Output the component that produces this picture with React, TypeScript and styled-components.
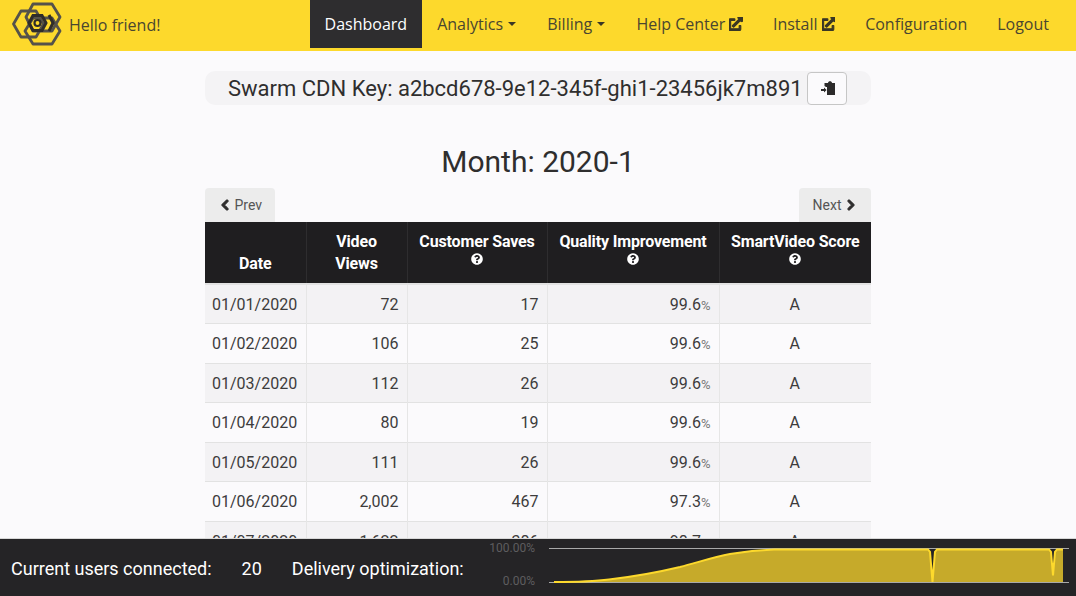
import React from "react"
import styled, { createGlobalStyle } from "styled-components"
import { FaChevronLeft, FaChevronRight, FaExternalLinkAlt, FaQuestionCircle } from "react-icons/fa"

const rows = [
  ["01/01/2020", "72", "17", "99.6"],
  ["01/02/2020", "106", "25", "99.6"],
  ["01/03/2020", "112", "26", "99.6"],
  ["01/04/2020", "80", "19", "99.6"],
  ["01/05/2020", "111", "26", "99.6"],
  ["01/06/2020", "2,002", "467", "97.3"],
  ["01/07/2020", "1,622", "386", "98.7"],
]

const Logo = () => (
  <svg width="50" height="46" viewBox="0 0 50 46" fill="none">
    <g stroke="#55524a" strokeWidth="2.8" strokeLinejoin="round">
      <path d="M1.5 23 L9 10 H24 L31.5 23 L24 36 H9 Z" />
      <path d="M14 16 L21 3 H40 L48 16 L40 30 H21 Z" />
      <path d="M13 30 L21 17 H40 L48 30 L40 43 H21 Z" />
    </g>
    <path d="M17 22 L21 14.5 H30 L34 22 L30 29.5 H21 Z" stroke="#2f2d2a" strokeWidth="3" />
    <path d="M37 14 L41 22 L37 30" stroke="#2f2d2a" strokeWidth="3" fill="none" />
    <circle cx="25.5" cy="22" r="3" stroke="#2f2d2a" strokeWidth="2.2" />
  </svg>
)

const PasteIcon = () => (
  <svg width="16" height="16" viewBox="0 0 16 16">
    <path d="M5.5 3 H9 C9 0.5 13 0.5 13 3 H16 V15 H8 V7 H7 L5.5 6 Z" fill="#2b2a2a" />
    <path d="M2 9 H5 V7.5 L7.6 10 L5 12.5 V11 H2 Z" fill="#2b2a2a" />
  </svg>
)

const curve =
  "M5 35 C30 35 45 34.5 60 32.5 C90 29 110 25 131 20 C150 15 165 10 181 7 C195 4.5 205 3 225 2.5 H379 L381 5 L383.5 35 L386 5 L388 2.5 H500 L502 5 L504 28.5 L506 5 L508 2.5 H514"

const Chart = () => (
  <ChartBox>
    <AxisLabels>
      <span>100.00%</span>
      <span>0.00%</span>
    </AxisLabels>
    <ChartSvg width="527" height="40" viewBox="0 0 527 40">
      <path d="M0 1.5 H520 M0 35.5 H520" stroke="#a9a9a9" strokeWidth="1.2" />
      <path d={`${curve} V35 H5 Z`} fill="#c6aa2a" />
      <path d={curve} stroke="#fdd92c" strokeWidth="2" fill="none" />
    </ChartSvg>
  </ChartBox>
)

const App = () => {
  return (
    <>
      <Global />
      <Navbar>
        <Brand>
          <Logo />
          <Hello>Hello friend!</Hello>
        </Brand>
        <Nav>
          <NavItem $active>Dashboard</NavItem>
          <NavItem>Analytics <Caret /></NavItem>
          <NavItem>Billing <Caret /></NavItem>
          <NavItem>Help Center <LinkIcon /></NavItem>
          <NavItem>Install <LinkIcon /></NavItem>
          <NavItem>Configuration</NavItem>
          <NavItem>Logout</NavItem>
        </Nav>
      </Navbar>
      <Main>
        <KeyBar>
          <KeyText>Swarm CDN Key: a2bcd678-9e12-345f-ghi1-23456jk7m891</KeyText>
          <CopyButton><PasteIcon /></CopyButton>
        </KeyBar>
        <Month>Month: 2020-1</Month>
        <Pager>
          <PageButton><BoldLeft /> Prev</PageButton>
          <PageButton $next>Next <BoldRight /></PageButton>
        </Pager>
        <Table>
          <colgroup>
            <col width="101" />
            <col width="101" />
            <col width="140" />
            <col width="172" />
            <col width="152" />
          </colgroup>
          <thead>
            <tr>
              <Th>Date</Th>
              <Th>Video<br />Views</Th>
              <Th>Customer Saves<HelpIcon /></Th>
              <Th>Quality Improvement<HelpIcon /></Th>
              <Th>SmartVideo Score<HelpIcon /></Th>
            </tr>
          </thead>
          <tbody>
            {rows.map((r) => (
              <Row key={r[0]}>
                <Td>{r[0]}</Td>
                <NumTd>{r[1]}</NumTd>
                <NumTd>{r[2]}</NumTd>
                <NumTd>{r[3]}<Pct>%</Pct></NumTd>
                <ScoreTd>A</ScoreTd>
              </Row>
            ))}
          </tbody>
        </Table>
      </Main>
      <Footer>
        <FooterLabel>Current users connected:</FooterLabel>
        <UserCount>20</UserCount>
        <FooterLabel>Delivery optimization:</FooterLabel>
        <Chart />
      </Footer>
    </>
  )
}

export default App

const HelpIcon = styled(FaQuestionCircle)`
  display: block;
  width: 12px;
  height: 12px;
  margin: 0 auto 10px;
`

const LinkIcon = styled(FaExternalLinkAlt)`
  width: 13.5px;
  height: 13.5px;
  stroke: currentColor;
  stroke-width: 40px;
`

const BoldLeft = styled(FaChevronLeft)`
  width: 12px;
  height: 12px;
  stroke: currentColor;
  stroke-width: 50px;
`

const BoldRight = styled(FaChevronRight)`
  width: 12px;
  height: 12px;
  stroke: currentColor;
  stroke-width: 50px;
`

const Global = createGlobalStyle`
  html, body {
    margin: 0;
    height: 596px;
    overflow: hidden;
    background: #fbfafc;
    font-family: Roboto, sans-serif;
    color: #2f2e2e;
  }
`

const Navbar = styled.header`
  height: 51px;
  background: #fdd92c;
  display: flex;
  align-items: flex-start;
  justify-content: space-between;
  padding: 0 12px;
  font-family: "Open Sans", sans-serif;
  color: #4a4630;
`

const Brand = styled.div`
  display: flex;
  align-items: center;
  height: 48px;
  gap: 7px;
`

const Hello = styled.span`
  font-size: 16px;
  padding-top: 2px;
`

const Nav = styled.nav`
  display: flex;
`

const NavItem = styled.div<{ $active?: boolean }>`
  height: 48px;
  padding: 0 15px;
  display: flex;
  align-items: center;
  font-size: 16px;
  white-space: pre;
  color: ${(p) => (p.$active ? "#fff" : "#4a4630")};
  background: ${(p) => (p.$active ? "#2e2d2f" : "transparent")};
  svg { color: #3a3725; }
`

const Caret = styled.span`
  width: 0;
  height: 0;
  border-left: 4px solid transparent;
  border-right: 4px solid transparent;
  border-top: 4px solid #3a3725;
  margin: 0 1px;
`

const Main = styled.main`
  width: 666px;
  margin: 0 auto;
  padding-top: 20px;
`

const KeyBar = styled.div`
  height: 34px;
  background: #f4f3f5;
  border-radius: 10px;
  display: flex;
  align-items: center;
  padding-left: 23px;
  gap: 4px;
`

const KeyText = styled.div`
  font-size: 22px;
  white-space: nowrap;
`

const CopyButton = styled.div`
  width: 40px;
  height: 33px;
  box-sizing: border-box;
  border: 1px solid #c6c6c6;
  border-radius: 4px;
  background: #fbfafc;
  display: flex;
  align-items: center;
  justify-content: center;
`

const Month = styled.h2`
  margin: 38px 0 0;
  height: 45px;
  line-height: 38px;
  font-size: 30px;
  font-weight: 400;
  text-align: center;
`

const Pager = styled.div`
  display: flex;
  justify-content: space-between;
`

const PageButton = styled.div<{ $next?: boolean }>`
  height: 34px;
  padding: ${(p) => (p.$next ? "0 14px 0 14px" : "0 13px 0 14px")};
  display: flex;
  align-items: center;
  white-space: pre;
  font-size: 14px;
  color: #555;
  background: #ececec;
  border-radius: 4px 4px 0 0;
  svg { color: #2f2e2e; }
`

const Table = styled.table`
  width: 666px;
  table-layout: fixed;
  border-collapse: collapse;
  font-size: 16px;
`

const Th = styled.th`
  height: 62px;
  box-sizing: border-box;
  padding: 8px 4px 8px;
  background: #1f1e20;
  color: #fff;
  font-size: 16px;
  line-height: 22px;
  letter-spacing: -0.15px;
  font-weight: 700;
  text-align: center;
  vertical-align: bottom;
  border-bottom: 2px solid #e2e2e2;
  border-right: 1px solid #2e2d2f;
  &:last-child { border-right: none; }
`

const Row = styled.tr`
  height: 39.5px;
  &:nth-child(odd) { background: #f3f2f4; }
  &:first-child td { border-top: none; }
`

const Td = styled.td`
  padding: 1px 8px 0 7px;
  border-top: 1px solid #e2e2e2;
  border-right: 1px solid #e6e6e6;
  color: #3d3c3c;
  &:last-child { border-right: none; }
`

const NumTd = styled(Td)`
  text-align: right;
`

const ScoreTd = styled(Td)`
  text-align: center;
`

const Pct = styled.span`
  font-size: 13px;
  color: #777;
`

const Footer = styled.footer`
  position: fixed;
  left: 0;
  right: 0;
  bottom: 0;
  height: 58px;
  background: #252426;
  border-top: 1px solid #d8d8d8;
  box-sizing: border-box;
  display: flex;
  align-items: center;
  padding: 2px 0 0 11px;
  color: #fff;
  font-size: 18px;
`

const FooterLabel = styled.span`
  white-space: nowrap;
`

const UserCount = styled.span`
  margin: 0 30px;
`

const ChartBox = styled.div`
  position: absolute;
  left: 480px;
  top: 3px;
  display: flex;
  gap: 14px;
`

const ChartSvg = styled.svg`
  margin-top: 5px;
`

const AxisLabels = styled.div`
  width: 55px;
  height: 45px;
  display: flex;
  flex-direction: column;
  justify-content: space-between;
  align-items: flex-end;
  font-size: 12px;
  line-height: 12px;
  color: #5e5d5f;
`
